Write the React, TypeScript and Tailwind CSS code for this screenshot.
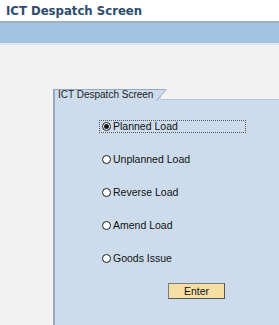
import React from "react";

const options = ["Planned Load", "Unplanned Load", "Reverse Load", "Amend Load", "Goods Issue"];

function Radio({ checked }: { checked: boolean }) {
  return (
    <span className="flex h-[9px] w-[9px] items-center justify-center rounded-full border border-[#1a1a1a] bg-white">
      {checked && <span className="h-[5px] w-[5px] rounded-full bg-[#1a1a1a]" />}
    </span>
  );
}

export default function App() {
  return (
    <div className="flex h-[325px] w-[279px] flex-col overflow-hidden bg-[#f2f2f2] font-['Liberation_Sans',Arial,sans-serif]">
      {/* Title */}
      <div className="flex h-[21px] items-center bg-white pl-[6px]">
        <h1 className="font-['DejaVu_Sans_Condensed','Liberation_Sans',sans-serif] text-[13px] font-bold leading-none text-[#2d4b6d]">
          ICT Despatch Screen
        </h1>
      </div>
      <div className="h-[2px] bg-[#9fb0c2]" />
      <div className="h-[20px] bg-[#a5c3e3]" />
      <div className="h-[2px] bg-[#dde6ef]" />

      {/* Content */}
      <div className="flex flex-1 flex-col pl-[53px] pt-[44px]">
        <div className="flex">
          <div className="relative flex h-[11px] items-center border-l-2 border-t border-[#94aac4] bg-[#ccdcec] pl-[3px] pr-[8px] text-[10px] leading-none text-[#222]">
            ICT Despatch Screen
            <svg className="absolute -right-[6px] top-[-1px]" width="12" height="12" viewBox="0 0 12 12">
              <polygon points="0,0 11,0 1,12 0,12" fill="#ccdcec" />
              <line x1="0" y1="0.5" x2="11" y2="0.5" stroke="#94aac4" />
              <line x1="11" y1="0.5" x2="1.5" y2="12" stroke="#94aac4" />
            </svg>
          </div>
          <div className="mt-[10px] flex-1 border-t border-[#b4c6da]" />
        </div>
        <div className="flex flex-1 flex-col border-l-2 border-[#94aac4] bg-[#ccdcec] pl-[47px] pt-[20px]">
          <div className="flex flex-col gap-[20px]">
            {options.map((o, i) => (
              <div
                key={o}
                className={`flex h-[13px] items-center gap-[2px] text-[10.5px] leading-none text-[#111] ${
                  i === 0 ? "-ml-[3px] w-[147px] border border-dotted border-[#555] pl-[2px]" : ""
                }`}
              >
                <Radio checked={i === 0} />
                <span>{o}</span>
              </div>
            ))}
          </div>
          <div className="mt-[18px] pl-[66px]">
            <button className="flex h-[16px] w-[57px] items-center justify-center border border-[#7a7a7a] border-b-[#555] border-r-[#555] bg-[#f5dfa5] text-[10.5px] leading-none text-[#111]">
              Enter
            </button>
          </div>
        </div>
      </div>
    </div>
  );
}
